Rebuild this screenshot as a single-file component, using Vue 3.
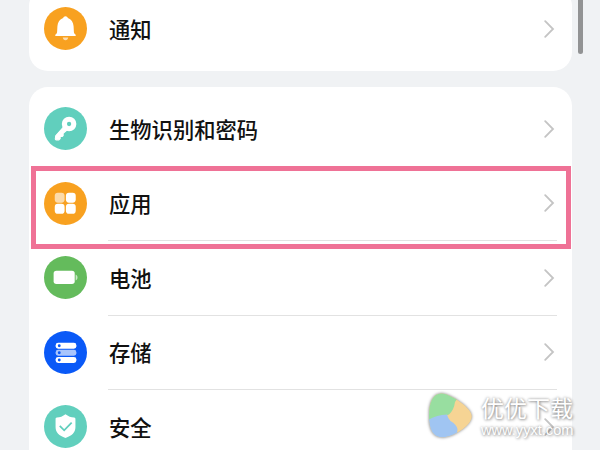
<template>
  <div class="screen">
    <div class="card" v-for="(group, idx) in groups" :key="idx">
      <button class="row" v-for="item in group" :key="item.icon" :class="{ selected: item.icon === 'apps' }">
        <svg class="icon" viewBox="0 0 42 42">
          <circle cx="21" cy="21" r="21" :fill="item.color" />
          <g v-if="item.icon === 'bell'" fill="#fff">
            <path d="M21 9c1.200 0 1.900.7 2.300 1.700 3.400 1.200 5.300 4.100 5.600 8l.3 5.600c.1 1.200.7 1.900 1.500 2.500.7.7.4 1.600-.6 1.600H11.900c-1 0-1.300-.9-.6-1.600.8-.6 1.400-1.300 1.500-2.500l.3-5.600c.3-3.900 2.200-6.800 5.600-8 .4-1 1.100-1.700 2.300-1.700z" />
            <path d="M18.300 29.800h5.400c-.3 1.600-1.200 2.600-2.700 2.600s-2.400-1-2.700-2.600z" opacity=".65" />
          </g>
          <g v-else-if="item.icon === 'key'">
            <circle cx="24.500" cy="16.600" r="4.600" fill="none" stroke="#fff" stroke-width="5" />
            <path d="M19 19.500 11.400 28.200 11 31.300c0 .5.400.8.900.8h2.700l1.200-1.200v-2.100h2.100l.8-.8v-2.200l4-3.500" fill="#fff" stroke="#fff" stroke-width="1" stroke-linejoin="round" />
          </g>
          <g v-else-if="item.icon === 'apps'" fill="#fff">
            <rect x="10.500" y="10.400" width="9.600" height="9.800" rx="3" opacity=".62" />
            <rect x="21.400" y="10.400" width="9.600" height="9.800" rx="3" />
            <rect x="10.500" y="21.300" width="9.600" height="9.800" rx="3" />
            <rect x="21.400" y="21.300" width="9.600" height="9.800" rx="3" />
          </g>
          <g v-else-if="item.icon === 'battery'" fill="#fff">
            <rect x="9.400" y="14.400" width="20.600" height="12.900" rx="2.700" />
            <path d="M30.900 18v6c1.200-.6 1.800-1.600 1.800-3s-.6-2.400-1.800-3z" opacity=".65" />
          </g>
          <g v-else-if="item.icon === 'storage'" fill="#fff">
            <rect x="11.400" y="11.500" width="20.200" height="5.900" rx="2.400" />
            <rect x="11.400" y="18.300" width="20.200" height="5.900" rx="2.400" opacity=".65" />
            <rect x="11.400" y="25.300" width="20.200" height="5.900" rx="2.400" />
            <circle v-for="y in [14.4, 21.3, 28.3]" :key="y" cx="14.900" :cy="y" r="1.400" :fill="item.color" />
          </g>
          <g v-else>
            <path d="M21 9c2.500 2 5.600 3.100 8.400 3.300 1 .1 1.300.6 1.300 1.500v8c0 5-3.300 8.200-9.700 10.400-6.400-2.200-9.700-5.400-9.700-10.400v-8c0-.9.300-1.400 1.300-1.500C15.400 12.100 18.500 11 21 9z" fill="#fff" />
            <path d="m15.400 20.400 4.300 4.300 7.300-7.500" fill="none" :stroke="item.color" stroke-width="1.700" />
          </g>
        </svg>
        <span class="label">{{ item.name }}</span>
        <svg class="arrow" viewBox="0 0 11 18">
          <path d="M1.200 1.200 9 9 1.200 16.800" />
        </svg>
      </button>
    </div>

    <div class="scrollbar"></div>

    <div class="watermark">
      <svg class="logo" viewBox="0 0 46 48">
        <defs>
          <clipPath id="blob">
            <path d="M13.500 1.500C21 1.500 43.700 15 43.700 24.500S24 45.300 14.500 45.300C5 45.300 1 38 1 24S5 1.500 13.500 1.500z" />
          </clipPath>
        </defs>
        <g clip-path="url(#blob)">
          <rect width="46" height="48" fill="#f6d494" />
          <path d="M0 0h34l-7 10q-1 8-6 12.500L0 29z" fill="#98dea0" />
          <path d="M0 28q8-5 19-5.500 1 4 3.500 6.500 6 3.500 7 8l-1 11H0z" fill="#a0c5f2" />
        </g>
      </svg>
      <div class="watermark-text">
        <div class="watermark-name">优优下载</div>
        <div class="watermark-url">www.yyxt.com</div>
      </div>
    </div>
  </div>
</template>

<script setup>
const groups = [
  [{ name: '通知', icon: 'bell', color: '#f8a120' }],
  [
    { name: '生物识别和密码', icon: 'key', color: '#61cfbd' },
    { name: '应用', icon: 'apps', color: '#f8a120' },
    { name: '电池', icon: 'battery', color: '#64bb5c' },
    { name: '存储', icon: 'storage', color: '#0a59f7' },
    { name: '安全', icon: 'shield', color: '#61cfbd' }
  ]
];
</script>

<style>
body {
  overflow: hidden;
}
</style>

<style scoped>
.screen {
  position: relative;
  height: 450px;
  overflow: hidden;
  box-sizing: border-box;
  padding: 0 28px 0 29px;
  background: #f0f2f4;
  font-family: "Noto Sans CJK SC", sans-serif;
}

.card {
  background: #fff;
  border-radius: 19px;
  margin-bottom: 16px;
  padding: 4.700px 0;
}

.card:first-child {
  margin-top: -13.100px;
}

.row {
  position: relative;
  display: flex;
  align-items: center;
  width: 100%;
  height: 74.550px;
  padding: 0 17px 0 15px;
  border: none;
  background: none;
  font-family: inherit;
  text-align: left;
}

.row:not(:last-child)::after {
  content: "";
  position: absolute;
  left: 79px;
  right: 15px;
  bottom: -0.500px;
  height: 1px;
  background: #e2e2e2;
}

/* frame drawn around the highlighted row */
.selected::before {
  content: "";
  position: absolute;
  z-index: 1;
  top: 0;
  left: 2px;
  right: 1px;
  height: 73px;
  border: 5px solid #ef7296;
}

.icon {
  width: 43px;
  height: 43px;
  flex: none;
}

.label {
  flex: 1;
  margin-left: 22px;
  font-size: 21.300px;
  font-weight: 500;
  line-height: 32px;
  color: #111;
}

.arrow {
  width: 11px;
  height: 18px;
  fill: none;
  stroke: #c4c4c4;
  stroke-width: 1.800;
  stroke-linecap: round;
}

.scrollbar {
  position: absolute;
  top: -10px;
  left: 578px;
  width: 5px;
  height: 63.500px;
  border-radius: 3px;
  background: #929394;
}

.watermark {
  position: absolute;
  left: 428px;
  top: 392px;
  display: flex;
}

.logo {
  width: 46px;
  height: 48px;
  filter: drop-shadow(0 0 1.500px rgba(0, 0, 0, 0.5));
}

.watermark-text {
  margin-left: 7px;
  color: #fff;
  white-space: nowrap;
  text-shadow: 0 0 3px rgba(0, 0, 0, 0.4), 1px 1px 3px rgba(0, 0, 0, 0.3);
}

.watermark-name {
  font-size: 23px;
  line-height: 31px;
}

.watermark-url {
  font-family: "Liberation Sans", sans-serif;
  font-size: 14.600px;
  line-height: 14px;
}
</style>
